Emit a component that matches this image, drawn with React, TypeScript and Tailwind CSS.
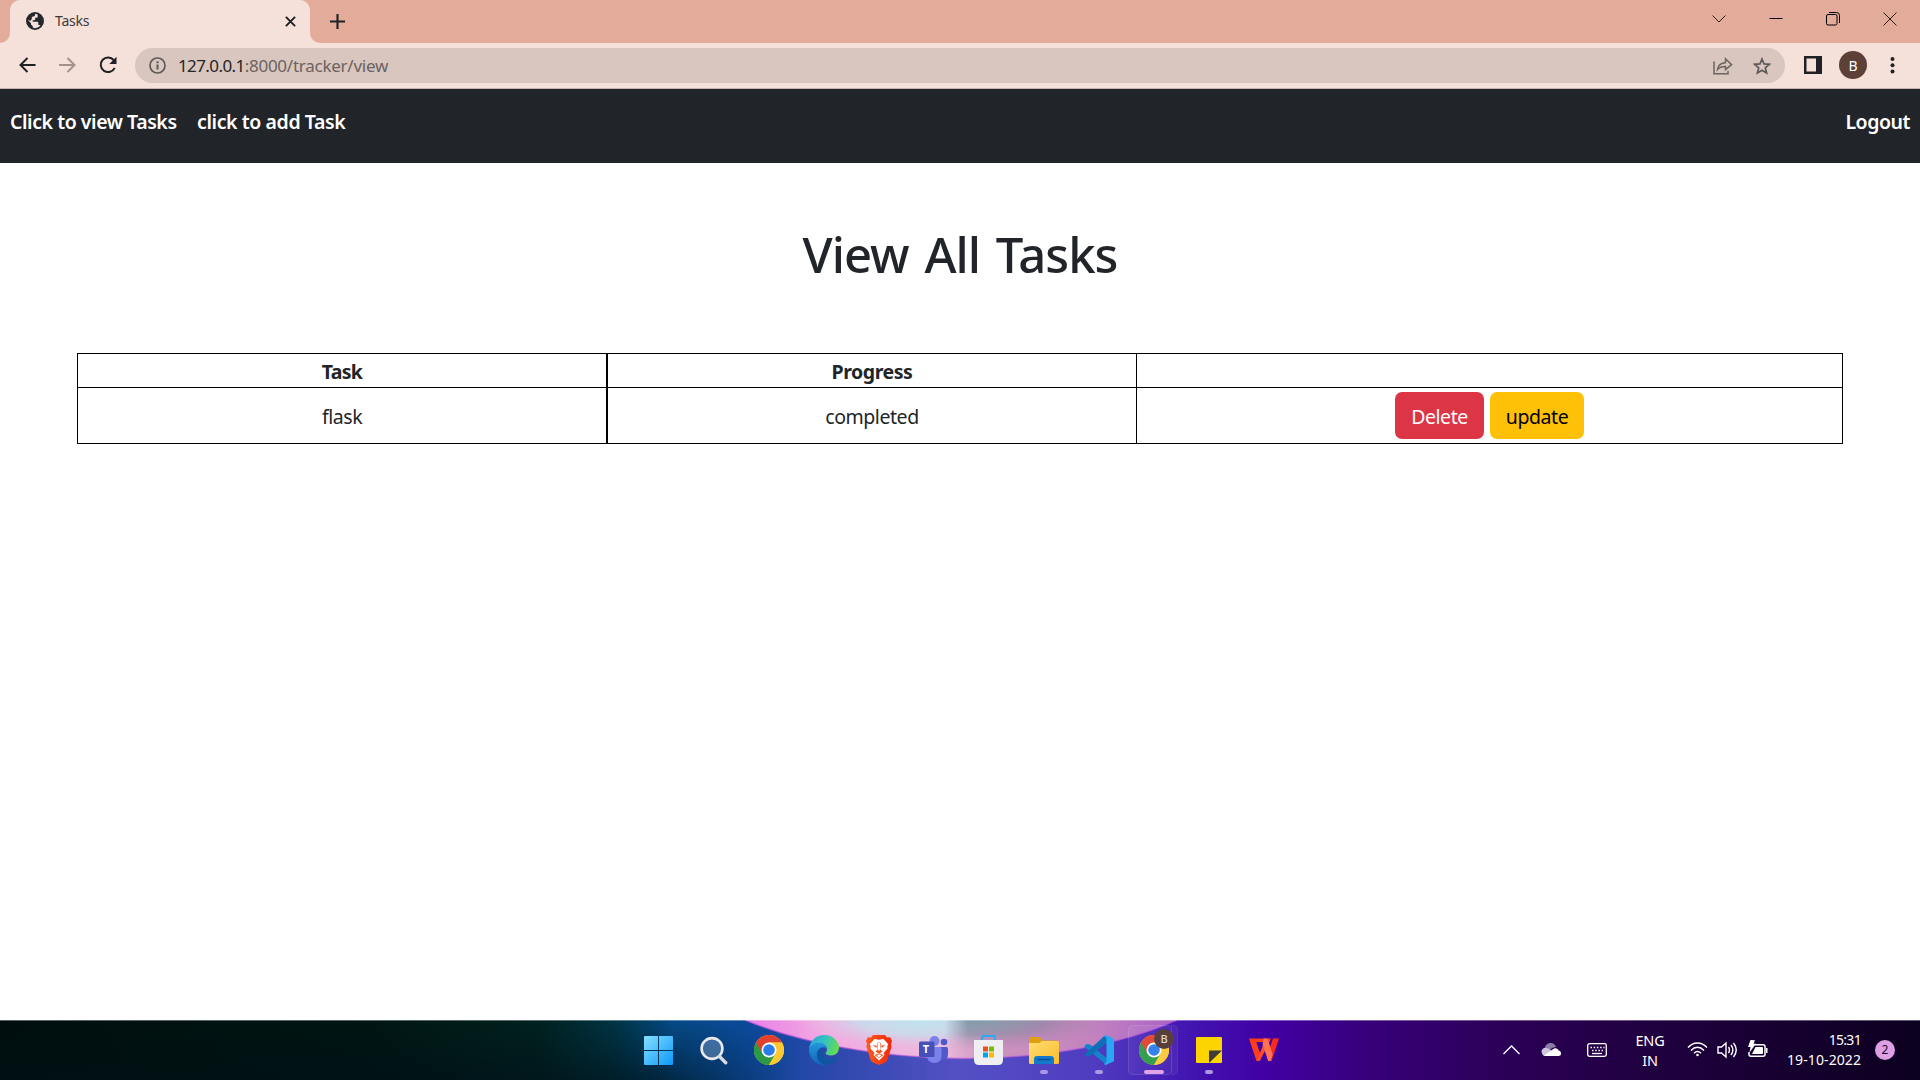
import type { ReactNode } from 'react';

function Globe() {
  return (
    <svg width="18" height="18" viewBox="0 0 18 18">
      <circle cx="9" cy="9" r="8.1" fill="#f6e1da" stroke="#25282b" strokeWidth="1.8" />
      <path d="M1.200 7.300 5 11.200v1.300l1.800 1.700v2.400A8.200 8.200 0 0 1 1.200 7.300Z" fill="#25282b" />
      <path d="M11.200 1.300c3.400.8 5.800 3.800 5.800 7.600 0 2.200-.9 4-2.200 5.300-.3-.8-.9-1.300-1.700-1.300h-.8v-2.200q0-1-1-1H6.700V8.300h1.500q1 0 1-1V5.800h1q1.600 0 1.600-1.600Z" fill="#25282b" />
      <path d="M1.400 7.500A7.700 7.700 0 0 1 9.300 1.200l-.5 2.900-3 .8v2.200l-1.600 1.900Z" fill="#25282b" />
    </svg>
  );
}

function TabStrip() {
  return (
    <div className="flex h-[43px] justify-between bg-[#e3ab99]">
      <div className="flex">
        <div className="w-[10px] bg-[#f6e1da]"><div className="h-full rounded-br-[10px] bg-[#e3ab99]" /></div>
        <div className="flex w-[300px] items-start rounded-t-[10px] bg-[#f6e1da] pl-4">
          <div className="pt-3"><Globe /></div>
          <span className="ml-[11px] mt-[11px] font-['Noto_Sans',sans-serif] text-[14px] leading-5 tracking-[-0.25px] text-[#3b3a3b]">Tasks</span>
          <svg className="ml-auto mr-[14px] mt-4" width="11" height="11" viewBox="0 0 11 11"><path d="m.9.9 9.200 9.200m0-9.200L.9 10.100" stroke="#202124" strokeWidth="2" /></svg>
        </div>
        <div className="w-[10px] bg-[#f6e1da]"><div className="h-full rounded-bl-[10px] bg-[#e3ab99]" /></div>
        <svg className="ml-[10px] mt-[14px]" width="15" height="15" viewBox="0 0 15 15"><path d="M7.500 0v15M0 7.500h15" stroke="#202124" strokeWidth="2.100" /></svg>
      </div>
      <div className="flex pr-[2px] text-[#2b1f1c]">
        <div className="flex w-[57px] justify-center pt-3"><svg width="14" height="14" fill="none" stroke="currentColor"><path d="m.5 3.500 6.500 6.500 6.500-6.500" /></svg></div>
        <div className="flex w-[57px] justify-center pt-3"><svg width="14" height="14"><path d="M.5 6.500h13" stroke="#000" /></svg></div>
        <div className="flex w-[57px] justify-center pt-3"><svg width="14" height="14" fill="none" stroke="#000"><rect x=".5" y="2.500" width="10.500" height="10.500" rx="1.500" /><path d="M3 .5h7.500a3 3 0 0 1 3 3V11" /></svg></div>
        <div className="flex w-[57px] justify-center pt-3"><svg width="14" height="14" fill="none" stroke="currentColor"><path d="m.5.500 13 13m0-13-13 13" /></svg></div>
      </div>
    </div>
  );
}

function Toolbar() {
  return (
    <div className="flex h-[46px] items-start border-b border-[#c4b3ad] bg-[#f6e1da] pt-[5px]">
      <svg className="ml-[19px] mt-[9px]" width="17" height="16" fill="none" stroke="#202124" strokeWidth="2"><path d="M16.500 8H2M8.500 1 1.500 8l7 7" /></svg>
      <svg className="ml-[23px] mt-[9px]" width="17" height="16" fill="none" stroke="#a3918c" strokeWidth="2"><path d="M0 8h15M8.500 1l7 7-7 7" /></svg>
      <svg className="ml-[23px] mt-[8px]" width="18" height="18" viewBox="0 0 18 18"><path d="M14.800 4.200A7.300 7.300 0 1 0 15.700 11.800" fill="none" stroke="#202124" strokeWidth="2" /><path d="M17.500.8v7.200h-7.200Z" fill="#202124" /></svg>
      <div className="ml-[18px] flex h-[35px] w-[1650px] items-center rounded-full bg-[#d8c6bf] pl-[14px] pr-[14px]">
        <svg width="17" height="17" fill="none" stroke="#5f5a5a"><circle cx="8.500" cy="8.500" r="7.500" strokeWidth="1.700" /><path d="M8.500 7.500v5M8.500 4.200v2" strokeWidth="2" /></svg>
        <span className="ml-3 font-['Noto_Sans',sans-serif] text-[17px] leading-6 tracking-[-0.25px] text-[#6b6261]"><span className="tracking-[-0.6px] text-[#262526]">127.0.0.1</span>:8000/tracker/view</span>
        <svg className="ml-auto" width="20" height="18" viewBox="0 0 20 18" fill="none" stroke="#6b6462" strokeWidth="1.500"><path d="M1 4.500v12.300h14V14" /><path d="M4.500 12.500c.7-4.500 3.500-6.500 8-6.700V1.800L18.600 7.600l-6.100 5V9.400c-3.600-.1-6 .8-8 3.100Z" /></svg>
        <svg className="ml-[20px]" width="18" height="18" viewBox="0 0 18 18" fill="none" stroke="#5f5a5a" strokeWidth="1.700"><path d="m9 2 2 4.900 5.300.4-4 3.500 1.300 5.200L9 13.200 4.400 16l1.300-5.200-4-3.500 5.300-.4Z" /></svg>
      </div>
      <svg className="ml-[19px] mt-2" width="18" height="18"><path d="M1.250 1.250h15.500v15.500h-15.500Z" fill="none" stroke="#202124" strokeWidth="2.500" /><path d="M12 1h5v16h-5Z" fill="#202124" /></svg>
      <div className="ml-[17px] mt-[3px] flex size-7 items-center justify-center rounded-full bg-[#5d4037] font-['Noto_Sans',sans-serif] text-[14px] text-white">B</div>
      <svg className="ml-[23px] mt-[8px]" width="5" height="18" fill="#202124"><circle cx="2.500" cy="3" r="2" /><circle cx="2.500" cy="9.300" r="2" /><circle cx="2.500" cy="15.500" r="2" /></svg>
    </div>
  );
}

function Page() {
  return (
    <div className="flex grow flex-col bg-white font-['Noto_Sans',sans-serif] text-[19.500px] leading-[30px] tracking-[-0.440px] text-[#212529]">
      <nav className="flex h-[74px] items-start bg-[#212529] px-[10px] pt-[18px] font-semibold text-white">
        <a className="w-[167px] whitespace-nowrap">Click to view Tasks</a>
        <a className="ml-5 whitespace-nowrap tracking-[-0.4px]">click to add Task</a>
        <a className="ml-auto tracking-[-0.45px]">Logout</a>
      </nav>
      <h1 className="mt-[61px] text-center text-[49px] font-medium leading-[60px] tracking-[-1px] [word-spacing:4px]">View All Tasks</h1>
      <div className="ml-[77px] mt-[69px] flex w-[1766px] flex-col border border-black text-center">
        <div className="flex h-[34px] border-b border-black font-bold">
          <div className="w-[530px] border-r-2 border-black pt-[3px] tracking-[-0.7px]">Task</div>
          <div className="w-[529px] border-r border-black pt-[3px]">Progress</div>
          <div className="grow" />
        </div>
        <div className="flex h-[55px]">
          <div className="w-[530px] border-r-2 border-black pt-[14px]">flask</div>
          <div className="w-[529px] border-r border-black pt-[14px]">completed</div>
          <div className="flex grow items-start justify-center gap-[6px] pt-1">
            <button className="h-[47px] w-[89px] rounded-[7px] bg-[#dc3545] pt-[2px] text-white">Delete</button>
            <button className="h-[47px] w-[94px] rounded-[7px] bg-[#ffc107] pt-[2px] text-black">update</button>
          </div>
        </div>
      </div>
    </div>
  );
}

function Wallpaper() {
  return (
    <svg className="absolute inset-0" width="1920" height="60" viewBox="0 0 1920 60" preserveAspectRatio="none">
      <defs>
        <linearGradient id="base" x1="0" x2="1920" y1="0" y2="0" gradientUnits="userSpaceOnUse">
          <stop offset="0" stopColor="#000f0d" /><stop offset=".2" stopColor="#001714" /><stop offset=".28" stopColor="#00221f" /><stop offset=".32" stopColor="#003545" />
          <stop offset=".35" stopColor="#064a86" /><stop offset=".39" stopColor="#0c4a9c" /><stop offset=".43" stopColor="#2b48ac" /><stop offset=".5" stopColor="#5450c4" />
          <stop offset=".57" stopColor="#4f3cc0" /><stop offset=".62" stopColor="#4214b0" /><stop offset=".66" stopColor="#4100a4" /><stop offset=".71" stopColor="#38007c" />
          <stop offset=".78" stopColor="#2b0058" /><stop offset=".86" stopColor="#200040" /><stop offset="1" stopColor="#0c001f" />
        </linearGradient>
        <linearGradient id="shade" x1="0" x2="0" y1="0" y2="1"><stop offset="0" stopColor="#001018" stopOpacity="0" /><stop offset="1" stopColor="#001018" stopOpacity=".6" /></linearGradient>
        <linearGradient id="fade" x1="500" x2="800" y1="0" y2="0" gradientUnits="userSpaceOnUse"><stop offset="0" stopColor="#fff" /><stop offset=".55" stopColor="#fff" /><stop offset="1" stopColor="#000" /></linearGradient>
        <mask id="left"><rect width="800" height="60" fill="url(#fade)" /></mask>
        <linearGradient id="glow" x1="740" x2="1180" y1="0" y2="0" gradientUnits="userSpaceOnUse">
          <stop offset="0" stopColor="#e77be6" /><stop offset=".18" stopColor="#f3a6e2" /><stop offset=".46" stopColor="#ecbcdd" /><stop offset=".56" stopColor="#cd94bd" /><stop offset=".8" stopColor="#c283bf" /><stop offset="1" stopColor="#a860c8" />
        </linearGradient>
        <radialGradient id="sky" cx="920" cy="0" r="125" gradientTransform="scale(1 .24)" gradientUnits="userSpaceOnUse"><stop offset="0" stopColor="#bde4ee" /><stop offset=".5" stopColor="#c9dcec" stopOpacity=".85" /><stop offset="1" stopColor="#e8bfe0" stopOpacity="0" /></radialGradient>
        <radialGradient id="dusk" cx="975" cy="0" r="135" gradientTransform="scale(1 .22)" gradientUnits="userSpaceOnUse"><stop offset="0" stopColor="#7f9cab" /><stop offset=".5" stopColor="#8f88a3" stopOpacity=".75" /><stop offset="1" stopColor="#b183af" stopOpacity="0" /></radialGradient>
        <linearGradient id="seam" x1="945" x2="968" y1="0" y2="0" gradientUnits="userSpaceOnUse"><stop offset="0" stopColor="#000" /><stop offset="1" stopColor="#fff" /></linearGradient>
        <mask id="right"><rect x="940" width="220" height="60" fill="url(#seam)" /></mask>
      </defs>
      <rect width="1920" height="60" fill="url(#base)" />
      <rect width="800" height="60" fill="url(#shade)" mask="url(#left)" />
      <path d="M745 0C800 23 880 38 965 38.500 1045 38 1120 25 1177 0Z" fill="url(#glow)" />
      <path d="M745 0C800 23 880 38 965 38.500 1045 38 1120 25 1177 0" fill="none" stroke="#bf5ce0" strokeOpacity=".6" strokeWidth="1.500" />
      <rect x="780" width="270" height="30" fill="url(#sky)" />
      <rect x="940" width="190" height="30" fill="url(#dusk)" mask="url(#right)" />
      <rect width="1920" height="1" fill="#fff" fillOpacity=".35" />
    </svg>
  );
}

function ChromeLogo() {
  return (
    <svg width="30" height="30" viewBox="0 0 30 30">
      <circle cx="15" cy="15" r="15" fill="#fcc934" />
      <path d="M2 7.500A15 15 0 0 0 15 30l6.600-11.300Z" fill="#2a9a46" />
      <path d="M2 7.500A15 15 0 0 1 28 7.500H15L8.500 18.800Z" fill="#e0402f" />
      <path d="M15 7.500h13A15 15 0 0 1 15 30l6.500-11.200Z" fill="#fcc934" />
      <circle cx="15" cy="15" r="7.500" fill="#fff" /><circle cx="15" cy="15" r="5.800" fill="#2b7de9" />
    </svg>
  );
}

function TaskIcon({ children, dot }: { children: ReactNode; dot?: boolean }) {
  return (
    <div className="flex h-[60px] w-[55px] flex-col items-center pt-[15px]">
      <div className="flex h-[30px] items-center justify-center">{children}</div>
      {dot && <div className="mt-[5px] h-1 w-2 rounded-full bg-[#aa98e2]" />}
    </div>
  );
}

function TaskbarApps() {
  return (
    <div className="ml-[631px] flex">
      <TaskIcon>
        <svg width="29" height="29"><defs><linearGradient id="win" x1="0" y1="0" x2="1" y2="1"><stop stopColor="#86e0ff" /><stop offset="1" stopColor="#0b98fa" /></linearGradient></defs><path d="M0 1Q0 0 1 0h13v14H0ZM15 0h13q1 0 1 1v13H15ZM0 15h14v14H1q-1 0-1-1ZM15 15h14v13q0 1-1 1H15Z" fill="url(#win)" /></svg>
      </TaskIcon>
      <TaskIcon>
        <svg width="28" height="29" viewBox="0 0 28 29"><circle cx="12" cy="12.500" r="10.400" fill="#8fb0cf" fillOpacity=".4" stroke="#e8e9ec" strokeWidth="2.600" /><path d="m19.500 20.500 6.200 6.200" stroke="#d9dadd" strokeWidth="3.400" strokeLinecap="round" /></svg>
      </TaskIcon>
      <TaskIcon><ChromeLogo /></TaskIcon>
      <TaskIcon>
        <svg width="30" height="30" viewBox="0 0 30 30">
          <defs><linearGradient id="edge" x1="0" x2="1" y1=".2" y2=".5"><stop stopColor="#2aa5df" /><stop offset=".5" stopColor="#34c3c0" /><stop offset="1" stopColor="#66dc50" /></linearGradient><linearGradient id="edge2" x1="0" x2="0" y1="0" y2="1"><stop stopColor="#2397dd" /><stop offset="1" stopColor="#1362b5" /></linearGradient></defs>
          <path d="M0 14.500C.5 6 7 0 15 0c9 0 15 6.500 15 12.500 0 5-3.500 8-8 8-3.500 0-5.500-1.200-5.500-2.300 0-.8 1.500-1.500 1.500-4C18 11 14.500 8 10.500 8 5.500 8 1.500 10.500 0 14.500Z" fill="url(#edge)" />
          <path d="M0 14.500C1.500 10.500 5.500 8 10.500 8c4.500 0 7.500 3 7.500 6-.5-1-1.800-1.800-3.300-1.800C10.500 12.200 8 16 8 20c0 4.500 3.500 8.500 8.500 9.900C6.500 31 0 23.500 0 14.500Z" fill="url(#edge2)" />
          <path d="M8 20c0-4 2.500-7.200 6-7.500-.8 1-1.500 2.300-1.500 4 0 4 4 7.500 9 7.500 2.500 0 4.500-.7 5.800-1.300.6-.2.900.200.6.700C25.500 27.500 21.500 30 16.500 29.900 11.500 28.500 8 24.500 8 20Z" fill="#0f55a0" />
        </svg>
      </TaskIcon>
      <TaskIcon>
        <svg width="26" height="30" viewBox="0 0 26 30">
          <defs><linearGradient id="brave"><stop stopColor="#ff5a1f" /><stop offset="1" stopColor="#f0280c" /></linearGradient></defs>
          <path d="m7 0-2 2.500-3.200-.2L0 6l1 3-.6 2.500 4 13Q5 26.500 7 27.500l6 2.500 6-2.500q2-1 2.600-3l4-13L25 9l1-3-1.800-3.700-3.200.2L19 0Z" fill="url(#brave)" />
          <path d="m8.500 4 4.500.8 4.500-.8 4.800 5.200-1 2 .2 2.300-4 4.500 1 2L13 25.500 7.500 20l1-2-4-4.500.2-2.300-1-2Z" fill="#fff" />
          <path d="m6.500 10 4.500.8-.8 2Zm13 0-4.500.8.800 2ZM11 8l2-.6 2 .6-.7 6.500 2.200 2.200-3.500 1.700-3.500-1.700 2.200-2.200ZM8.500 20l4.500-1.500 4.500 1.500-4.500 3Z" fill="#fb4b1b" />
          <path d="M11.600 8h2.800l-.6 7.500h-1.600ZM10.500 20.500l2.500-1.300 2.500 1.300-2.500 2Z" fill="#fff" />
        </svg>
      </TaskIcon>
      <TaskIcon>
        <div className="relative h-[28px] w-[30px]">
          <svg width="30" height="28" viewBox="0 0 30 28"><circle cx="15.500" cy="5" r="5" fill="#7a82e8" /><circle cx="25" cy="6" r="3.300" fill="#5059c9" /><path d="M20 11h7.500q1.500 0 1.500 1.500V18q0 6-5 6-4 0-4-3Z" fill="#5059c9" /><path d="M9 11h12q1.500 0 1.500 1.500V20q0 7-7 7T8 20Z" fill="#7b83eb" /><rect y="5.500" width="15.500" height="15.500" rx="1.500" fill="#4650b8" /></svg>
          <span className="absolute left-0 top-[5px] w-[15px] text-center font-['Noto_Sans',sans-serif] text-[11px] font-bold leading-4 text-white">T</span>
        </div>
      </TaskIcon>
      <TaskIcon>
        <svg width="29" height="30" viewBox="0 0 29 30"><path d="M8 6V3q0-2 2-2h9q2 0 2 2v3" fill="none" stroke="#29aaf0" strokeWidth="2" /><path d="M0 5h29v20q0 5-5 5H5q-5 0-5-5Z" fill="#efeff1" /><path d="M9 11.500h5v5H9Z" fill="#f04f24" /><path d="M15 11.500h5v5h-5Z" fill="#7fba00" /><path d="M9 17.500h5v5H9Z" fill="#00a4ef" /><path d="M15 17.500h5v5h-5Z" fill="#ffb900" /></svg>
      </TaskIcon>
      <TaskIcon dot>
        <svg width="30" height="27" viewBox="0 0 30 27"><defs><linearGradient id="folder" x1="0" x2="1" y1="0" y2="1"><stop stopColor="#ffdc72" /><stop offset="1" stopColor="#f9bd2b" /></linearGradient></defs><path d="M0 1.500Q0 0 1.500 0h8q1 0 2 1l2 2.500H29V9H0Z" fill="#dfa010" /><path d="M0 6h10.500L13 4h15.500Q30 4 30 5.500v20q0 1.500-1.500 1.500h-27Q0 27 0 25.500Z" fill="url(#folder)" /><path d="M5 27v-5q0-3 3-3h14q3 0 3 3v5Z" fill="#1279cd" /><path d="M9 22.500h12" stroke="#064d91" strokeWidth="1.400" strokeLinecap="round" /></svg>
      </TaskIcon>
      <TaskIcon dot>
        <svg width="30" height="30" viewBox="0 0 30 30"><path d="m.5 11 2-2 3 .2 18 14.500v5.800l-2-.5-21-17Z" fill="#1583cc" /><path d="M.5 19.500 20.500.8 23 2v6L5 21.500 2.500 21.300Z" fill="#0c6fb8" /><path d="M21.500 0 29 3.200q1 .5 1 1.500v20.600q0 1-1 1.500L21.500 30l-1.700-1 2.700-2V3l-2.500-2Z" fill="#28a8f2" /></svg>
      </TaskIcon>
      <div className="relative flex h-[60px] w-[55px] flex-col items-center pt-[15px]">
        <div className="absolute left-[2px] top-[5px] h-[50px] w-[44px] rounded-[5px] border border-white/10 bg-white/5" />
        <div className="absolute left-[45px] top-[5px] h-[50px] w-[7px] rounded-r-[5px] border border-l-0 border-white/5 bg-white/5" />
        <ChromeLogo />
        <div className="absolute left-[28px] top-[9px] flex size-5 items-center justify-center rounded-full bg-[#57403b] font-['Noto_Sans',sans-serif] text-[11px] font-medium text-[#e0d4d0]">B</div>
        <div className="mt-[5px] h-1 w-5 rounded-full bg-[#dda0e4]" />
      </div>
      <TaskIcon dot>
        <svg width="26" height="26"><path d="M0 1q0-1 1-1h24q1 0 1 1v24q0 1-1 1H1q-1 0-1-1Z" fill="#fcd500" /><path d="M13 13.500h13L13 26Z" fill="#3e3b3a" /></svg>
      </TaskIcon>
      <TaskIcon>
        <svg width="30" height="24" viewBox="0 0 30 24"><path d="M24 .5h6L22.500 23h-3l-1.500-5Z" fill="#fb2a1a" /><path d="M0 .5h22L20.500 4H7.300l4.200 12.500L10 23H7.500Z" fill="#ff3d18" /><path d="M15.500 3.500h5.300L11.500 21.500 10.500 23H7.700Z" fill="#ff4a2c" /><path d="M14.500.5h4l5.200 16L21.500 23h-2.300L13.500 6Z" fill="#ff7354" /></svg>
      </TaskIcon>
    </div>
  );
}

function Tray() {
  return (
    <div className="ml-auto flex pr-[25px] font-['Noto_Sans',sans-serif] text-[14.500px] leading-5 text-white">
      <svg className="mt-6" width="17" height="12" fill="none" stroke="#fff" strokeWidth="1.300"><path d="m.5 10 8-8 8 8" /></svg>
      <svg className="ml-[21px] mt-[22px]" width="21" height="15" viewBox="0 0 21 15"><path d="M4 8C3.500 3 6.500 1 9.500 1c3 0 5 2 5.500 4-4 0-6 3-8 5Z" fill="#8d7da5" /><path d="M1 11.500C-1 7 4 4.500 7 6.500l7 4L8 14H4Q2 14 1 11.500Z" fill="#cfc5dc" /><path d="M3 13.500C6 11 9 9.500 11 8c3-3 6-1.500 6.500.5 3 0 4 5.500 0 5.500H4.500Z" fill="#fff" /></svg>
      <svg className="ml-[25px] mt-[23px]" width="20" height="14" fill="none" stroke="#fff"><rect x=".7" y=".7" width="18.600" height="12.600" rx="1.800" strokeWidth="1.300" /><path d="M3.500 4.500h14M5 7.500h11" strokeWidth="1.500" strokeDasharray="1.500 1.700" /><path d="M5 10.500h10" strokeWidth="1.300" /></svg>
      <div className="ml-[28px] mt-[10px] w-[30px] text-center tracking-[-0.2px]">ENG<br />IN</div>
      <svg className="ml-[22px] mt-[21px]" width="21" height="16" viewBox="0 0 21 16" fill="none" stroke="#fff" strokeWidth="1.500"><path d="M1 6.500c5.500-6 13.500-6 19 0M4 9.500c4-4.200 9-4.200 13 0M7 12.200c2.200-2.200 4.800-2.200 7 0" /><circle cx="10.500" cy="14" r="1.300" fill="#fff" stroke="none" /></svg>
      <svg className="ml-[9px] mt-[21px]" width="21" height="18" viewBox="0 0 21 18" fill="none" stroke="#fff" strokeWidth="1.400"><path d="M1 6h3.500L9 2v14l-4.500-4H1Z" /><path d="M11.500 6q2 3 0 6M14 4q3.800 5 0 10M16.500 2q5.500 7 0 14" /></svg>
      <svg className="ml-[9px] mt-[20px]" width="21" height="18" viewBox="0 0 21 18"><path d="M8 4.700h8q2 0 2 2v7.600q0 2-2 2H4q-2 0-2-2V12" fill="none" stroke="#fff" strokeWidth="1.500" /><path d="M8.500 7H15q1 0 1 1v5q0 1-1 1H5ZM19 8h1.500v5H19ZM3.500 0 8 .200 6.500 3.700H9L2.500 12.500 3.500 7H1Z" fill="#fff" /></svg>
      <div className="ml-[19px] mt-[10px] w-[74px] whitespace-nowrap text-right text-[14px] tracking-[0.1px]"><span className="tracking-[-0.7px]">15:31</span><br />19-10-2022</div>
      <div className="ml-[14px] mt-[20px] flex size-5 items-center justify-center rounded-full bg-[#dda0e4] text-[12px] text-[#1b0a2b]">2</div>
    </div>
  );
}

export default function App() {
  return (
    <div className="flex h-[1080px] w-[1920px] flex-col overflow-hidden">
      <TabStrip />
      <Toolbar />
      <Page />
      <div className="relative h-[60px]">
        <Wallpaper />
        <div className="relative flex h-full"><TaskbarApps /><Tray /></div>
      </div>
    </div>
  );
}
